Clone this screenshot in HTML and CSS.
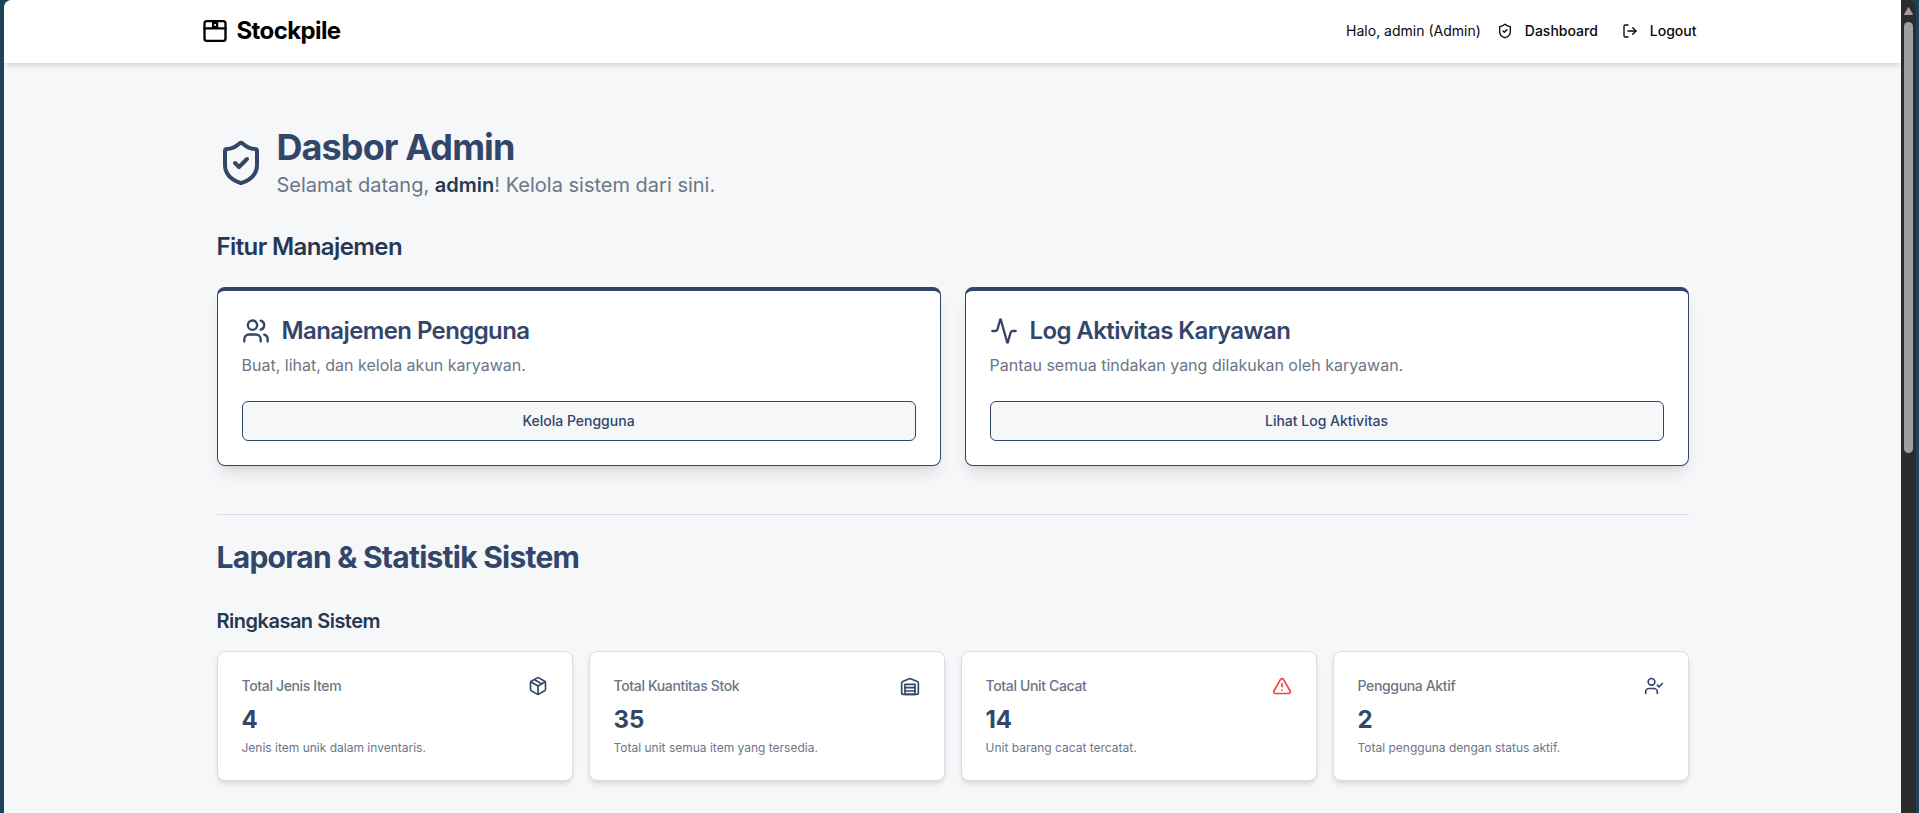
FILE: index.html
```html
<!DOCTYPE html>
<html lang="id">
<head>
<meta charset="utf-8">
<title>Stockpile</title>
<link rel="stylesheet" href="styles.css">
</head>
<body>
<div class="window">
  <div class="page">
    <header class="header">
      <div class="header-inner">
        <a class="brand">
          <svg class="icon icon-28" viewBox="0 0 24 24"><rect x="3" y="3.600" width="18" height="16.800" rx="2"/><path d="M3 9.800h18"/><rect x="10.400" y="5" width="3.400" height="3.700"/></svg>
          <span>Stockpile</span>
        </a>
        <nav class="nav">
          <span class="greeting">Halo, admin (Admin)</span>
          <a class="nav-link"><svg class="icon icon-16" viewBox="0 0 24 24"><path d="M20 13c0 5-3.500 7.500-7.660 8.950a1 1 0 0 1-.67-.01C7.500 20.500 4 18 4 13V6a1 1 0 0 1 1-1c2 0 4.500-1.200 6.240-2.720a1.170 1.170 0 0 1 1.520 0C14.510 3.810 17 5 19 5a1 1 0 0 1 1 1z"/><path d="m9 12 2 2 4-4"/></svg>Dashboard</a>
          <a class="nav-link"><svg class="icon icon-16" viewBox="0 0 24 24"><path d="M9 21H5a2 2 0 0 1-2-2V5a2 2 0 0 1 2-2h4"/><path d="m16 17 5-5-5-5"/><path d="M21 12H9"/></svg>Logout</a>
        </nav>
      </div>
    </header>
    <main class="main">
      <section class="hero">
        <svg class="icon icon-48" viewBox="0 0 24 24"><path d="M20 13c0 5-3.500 7.500-7.660 8.950a1 1 0 0 1-.67-.01C7.500 20.500 4 18 4 13V6a1 1 0 0 1 1-1c2 0 4.500-1.200 6.240-2.720a1.170 1.170 0 0 1 1.520 0C14.510 3.810 17 5 19 5a1 1 0 0 1 1 1z"/><path d="m9 12 2 2 4-4"/></svg>
        <div>
          <h1 class="title">Dasbor Admin</h1>
          <p class="subtitle">Selamat datang, <strong>admin</strong>! Kelola sistem dari sini.</p>
        </div>
      </section>
      <section class="features">
        <h2 class="section-title">Fitur Manajemen</h2>
        <div class="feature-grid">
          <article class="feature-card">
            <h3 class="feature-title"><svg class="icon icon-28" viewBox="0 0 24 24"><path d="M16 21v-2a4 4 0 0 0-4-4H6a4 4 0 0 0-4 4v2"/><circle cx="9" cy="7" r="4"/><path d="M22 21v-2a4 4 0 0 0-3-3.870"/><path d="M16 3.130a4 4 0 0 1 0 7.750"/></svg>Manajemen Pengguna</h3>
            <p class="feature-text">Buat, lihat, dan kelola akun karyawan.</p>
            <a class="button">Kelola Pengguna</a>
          </article>
          <article class="feature-card">
            <h3 class="feature-title"><svg class="icon icon-28" viewBox="0 0 24 24"><path d="M22 12h-2.480a2 2 0 0 0-1.930 1.460l-2.350 8.360a.25.25 0 0 1-.48 0L9.240 2.180a.25.25 0 0 0-.48 0l-2.350 8.360A2 2 0 0 1 4.490 12H2"/></svg>Log Aktivitas Karyawan</h3>
            <p class="feature-text">Pantau semua tindakan yang dilakukan oleh karyawan.</p>
            <a class="button">Lihat Log Aktivitas</a>
          </article>
        </div>
      </section>
      <section class="reports">
        <h2 class="reports-title">Laporan &amp; Statistik Sistem</h2>
        <h3 class="summary-title">Ringkasan Sistem</h3>
        <div class="stat-grid">
          <article class="stat-card">
            <div class="stat-head"><span>Total Jenis Item</span><svg class="icon icon-20" viewBox="0 0 24 24"><path d="M11 21.730a2 2 0 0 0 2 0l7-4A2 2 0 0 0 21 16V8a2 2 0 0 0-1-1.730l-7-4a2 2 0 0 0-2 0l-7 4A2 2 0 0 0 3 8v8a2 2 0 0 0 1 1.730z"/><path d="M12 22V12"/><path d="M3.290 7 12 12l8.710-5"/><path d="m7.500 4.270 9 5.150"/></svg></div>
            <div class="stat-value">4</div>
            <p class="stat-text">Jenis item unik dalam inventaris.</p>
          </article>
          <article class="stat-card">
            <div class="stat-head"><span>Total Kuantitas Stok</span><svg class="icon icon-20" viewBox="0 0 24 24"><path d="M22 8.350V20a2 2 0 0 1-2 2H4a2 2 0 0 1-2-2V8.350A2 2 0 0 1 3.260 6.500l8-3.200a2 2 0 0 1 1.480 0l8 3.200A2 2 0 0 1 22 8.350Z"/><path d="M6 18h12"/><path d="M6 14h12"/><rect width="12" height="12" x="6" y="10"/></svg></div>
            <div class="stat-value">35</div>
            <p class="stat-text">Total unit semua item yang tersedia.</p>
          </article>
          <article class="stat-card">
            <div class="stat-head"><span>Total Unit Cacat</span><svg class="icon icon-20 danger" viewBox="0 0 24 24"><path d="m21.730 18-8-14a2 2 0 0 0-3.480 0l-8 14A2 2 0 0 0 4 21h16a2 2 0 0 0 1.730-3"/><path d="M12 9v4"/><path d="M12 17h.01"/></svg></div>
            <div class="stat-value">14</div>
            <p class="stat-text">Unit barang cacat tercatat.</p>
          </article>
          <article class="stat-card">
            <div class="stat-head"><span>Pengguna Aktif</span><svg class="icon icon-20" viewBox="0 0 24 24"><path d="m16 11 2 2 4-4"/><path d="M16 21v-2a4 4 0 0 0-4-4H6a4 4 0 0 0-4 4v2"/><circle cx="9" cy="7" r="4"/></svg></div>
            <div class="stat-value">2</div>
            <p class="stat-text">Total pengguna dengan status aktif.</p>
          </article>
        </div>
      </section>
    </main>
  </div>
  <div class="scrollbar">
    <svg class="scroll-arrow" viewBox="0 0 9 8"><path d="M4.500 0.500 8.500 7.500H.5Z"/></svg>
    <div class="scroll-thumb"></div>
  </div>
</div>
</body>
</html>
```
FILE: styles.css
```css
* { box-sizing: border-box; }
body, h1, h2, h3, p { margin: 0; }
body {
  height: 813px;
  overflow: hidden;
  padding: 0 3px 0 4px;
  background: #1c435b;
  font-family: Inter, "Liberation Sans", sans-serif;
  color: #263754;
}
.window {
  display: flex;
  height: 813px;
  overflow: hidden;
  border-radius: 8px 8px 0 0;
  background: #2c2c2c;
}
.page { flex: 1; background: #f5f7f9; }
.scrollbar {
  width: 15px;
  display: flex;
  flex-direction: column;
  align-items: center;
  padding-top: 7px;
}
.scroll-arrow { width: 9px; height: 8px; fill: #9f9f9f; stroke: #9f9f9f; stroke-linejoin: round; }
.scroll-thumb { width: 9px; height: 431px; margin-top: 7px; border-radius: 5px; background: #9f9f9f; }

.icon {
  flex: none;
  fill: none;
  stroke: currentColor;
  stroke-width: 2;
  stroke-linecap: round;
  stroke-linejoin: round;
}
.icon-16 { width: 16px; height: 16px; }
.icon-20 { width: 20px; height: 20px; }
.icon-28 { width: 28px; height: 28px; }
.icon-48 { width: 48px; height: 48px; }
.danger { color: #ef4444; }

.header {
  height: 63px;
  background: #fff;
  box-shadow: 0 4px 6px -1px rgba(0, 0, 0, .1), 0 2px 4px -2px rgba(0, 0, 0, .1);
  color: #09090b;
}
.header-inner {
  display: flex;
  align-items: center;
  justify-content: space-between;
  width: 1504px;
  height: 62px;
  margin: 0 auto;
}
.brand { display: flex; align-items: center; gap: 8px; font-size: 24px; font-weight: 700; letter-spacing: -.6px; line-height: 32px; color: #000; }
.nav { display: flex; align-items: center; gap: 8px; font-size: 14px; line-height: 20px; }
.nav-link { display: flex; align-items: center; gap: 12px; padding: 0 8px; font-weight: 500; }

.main { width: 1472px; margin: 0 auto; padding-top: 64px; }
.hero { display: flex; align-items: center; gap: 12px; margin-bottom: 32px; color: #33466a; }
.title { font-size: 36px; font-weight: 700; line-height: 40px; letter-spacing: -.9px; }
.subtitle { margin-top: 4px; font-size: 20px; line-height: 28px; color: #6b7686; }
.subtitle strong { font-weight: 600; color: #263754; }
.section-title { margin-bottom: 24px; font-size: 24px; font-weight: 600; line-height: 32px; letter-spacing: -.6px; }
.feature-grid { display: grid; grid-template-columns: 1fr 1fr; gap: 24px; }
.feature-card {
  padding: 24px;
  border: 1px solid #33466a;
  border-top-width: 4px;
  border-radius: 8px;
  background: #fff;
  box-shadow: 0 10px 15px -3px rgba(0, 0, 0, .1), 0 4px 6px -4px rgba(0, 0, 0, .1);
}
.feature-title { display: flex; align-items: center; gap: 12px; font-size: 24px; font-weight: 600; line-height: 32px; letter-spacing: -.6px; color: #33466a; }
.feature-text { margin: 6px 0 24px; font-size: 16px; line-height: 24px; color: #6b7686; }
.button {
  display: flex;
  align-items: center;
  justify-content: center;
  height: 40px;
  padding-bottom: 1px;
  border: 1px solid #33466a;
  border-radius: 6px;
  background: #f5f7f9;
  font-size: 14px;
  font-weight: 500;
  line-height: 20px;
  color: #33466a;
}
.reports { margin-top: 48px; padding-top: 24px; border-top: 1px solid #d9dee7; }
.reports-title { margin-bottom: 32px; font-size: 30px; font-weight: 700; line-height: 36px; letter-spacing: -.75px; color: #33466a; }
.summary-title { margin-bottom: 16px; font-size: 20px; font-weight: 600; line-height: 28px; letter-spacing: -.5px; }
.stat-grid { display: grid; grid-template-columns: repeat(4, 1fr); gap: 16px; }
.stat-card {
  padding: 24px;
  border: 1px solid #d9dee7;
  border-radius: 8px;
  background: #fff;
  box-shadow: 0 4px 6px -1px rgba(0, 0, 0, .1), 0 2px 4px -2px rgba(0, 0, 0, .1);
  color: #33466a;
}
.stat-head { display: flex; justify-content: space-between; margin-bottom: 8px; font-size: 14px; font-weight: 500; line-height: 20px; letter-spacing: -.35px; }
.stat-head span { color: #6b7686; }
.stat-value { font-size: 24px; font-weight: 700; line-height: 32px; }
.stat-text { margin-top: 4px; font-size: 12px; line-height: 16px; color: #6b7686; }
```
